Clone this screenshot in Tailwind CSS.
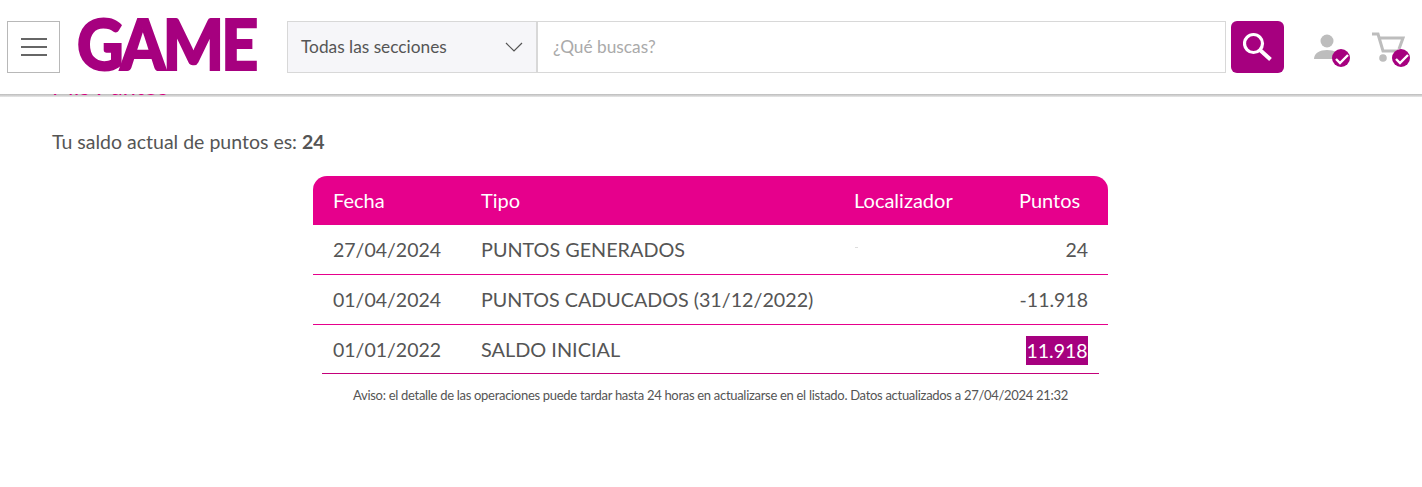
<!DOCTYPE html>
<html lang="es">
<head>
    <meta charset="UTF-8">
    <title>Mis Puntos</title>
    <script src="https://cdn.jsdelivr.net/npm/@tailwindcss/browser@4"></script>
</head>
<body class="bg-white font-['Lato',sans-serif] text-[#555] h-[487px] overflow-hidden">
    <header class="relative z-10 h-[94px] bg-white flex items-start pt-[21px] pl-[7px]">
        <button class="w-[53px] h-[52px] border border-[#b8b8b8] flex flex-col items-center justify-center gap-[6px] shrink-0">
            <span class="block w-[26px] h-[2px] bg-[#666]"></span>
            <span class="block w-[26px] h-[2px] bg-[#666]"></span>
            <span class="block w-[26px] h-[2px] bg-[#666]"></span>
        </button>
        <div class="w-[180px] ml-[17px] -mt-[17px] h-[66px] text-[#a6007f] text-[70px] leading-[78px] font-black tracking-[-3px] shrink-0 origin-left scale-x-[0.92] [-webkit-text-stroke:2px_#a6007f]">GAME</div>
        <div class="ml-[30px] w-[939px] h-[52px] flex border border-[#d8d8d8] shrink-0">
            <div class="w-[250px] bg-[#f6f6f9] border-r-2 border-[#d8d8d8] flex items-center justify-between pl-[13px] pr-[13px] text-[17.3px] text-[#555]">
                <span>Todas las secciones</span>
                <svg width="18" height="10" viewBox="0 0 18 10" fill="none" stroke="#555" stroke-width="1.2"><path d="M1 1l8 8 8-8"/></svg>
            </div>
            <div class="flex-1 flex items-center pl-[15px] text-[17.3px] text-[#aaa]">¿Qué buscas?</div>
        </div>
        <button class="ml-[5px] w-[53px] h-[52px] bg-[#a6007f] rounded-[6px] flex items-center justify-center shrink-0">
            <svg width="30" height="30" viewBox="0 0 30 30" fill="none" stroke="#fff" stroke-width="3.2"><circle cx="10.5" cy="11.5" r="9"/><path d="M17 18l10.5 9.5" stroke-width="4"/></svg>
        </button>
        <svg class="ml-[29px] mt-[11px] shrink-0" width="40" height="36" viewBox="0 0 40 36">
            <circle cx="14" cy="9" r="6.5" fill="#bdbdbd"/>
            <path d="M1 27c0-6 6-9 13-9s13 3 13 9z" fill="#bdbdbd"/>
            <circle cx="28" cy="26" r="9" fill="#a6007f"/>
            <path d="M23 27l4 4 8-8" fill="none" stroke="#fff" stroke-width="2.4"/>
        </svg>
        <svg class="ml-[18px] mt-[11px] shrink-0" width="40" height="36" viewBox="0 0 40 36">
            <path d="M1 2h6l5 17h15M9 6h23l-4 11" fill="none" stroke="#bdbdbd" stroke-width="3"/>
            <circle cx="12" cy="26" r="3.8" fill="#bdbdbd"/>
            <circle cx="30" cy="26" r="9" fill="#a6007f"/>
            <path d="M25 27l4 4 8-8" fill="none" stroke="#fff" stroke-width="2.4"/>
        </svg>
    </header>
    <div class="h-[3px] bg-gradient-to-b from-[#bbb] to-[#e8e8e8]"></div>
    <main class="-mt-[25px] px-[52px]">
        <h1 class="text-[23.6px] leading-[28px] text-[#d6007f]">Mis Puntos</h1>
        <p class="mt-[28px] text-[19.5px] leading-[28px]">Tu saldo actual de puntos es: <b>24</b></p>
        <div class="mt-[20px] ml-[261px] w-[795px]">
            <div class="grid grid-cols-[148px_373px_165px_1fr] h-[49px] items-center pl-[20px] pb-[1px] bg-[#e6008c] text-white text-[20px] rounded-t-[14px]">
                <span>Fecha</span><span>Tipo</span><span>Localizador</span><span>Puntos</span>
            </div>
            <div class="grid grid-cols-[148px_373px_165px_1fr] h-[50px] items-center px-[20px] text-[19.5px] border-b border-b-[#e6008c]">
                <span>27/04/2024</span><span class="text-[19.8px]">PUNTOS GENERADOS</span><span class="block w-[3px] h-px -mt-[5px] ml-[1px] bg-[#ddd]"></span><span class="text-right">24</span>
            </div>
            <div class="grid grid-cols-[148px_373px_165px_1fr] h-[50px] items-center px-[20px] text-[19.5px] border-b border-b-[#e6008c]">
                <span>01/04/2024</span><span class="text-[19.7px]">PUNTOS CADUCADOS (31/12/2022)</span><span></span><span class="text-right">-11.918</span>
            </div>
            <div class="grid grid-cols-[148px_373px_165px_1fr] h-[48px] items-center pt-[1px] px-[20px] text-[19.5px]">
                <span>01/01/2022</span><span class="text-[19.9px]">SALDO INICIAL</span><span></span><span class="text-right"><span class="inline-block w-[62px] leading-[29px] text-center align-middle bg-[#a6007f] text-white">11.918</span></span>
            </div>
            <div class="mx-[9px] border-t border-t-[#c4007a]"></div>
            <p class="mt-[13px] text-center text-[13px] leading-[16px] tracking-[-0.3px]">Aviso: el detalle de las operaciones puede tardar hasta 24 horas en actualizarse en el listado. Datos actualizados a 27/04/2024 21:32</p>
        </div>
    </main>
</body>
</html>
